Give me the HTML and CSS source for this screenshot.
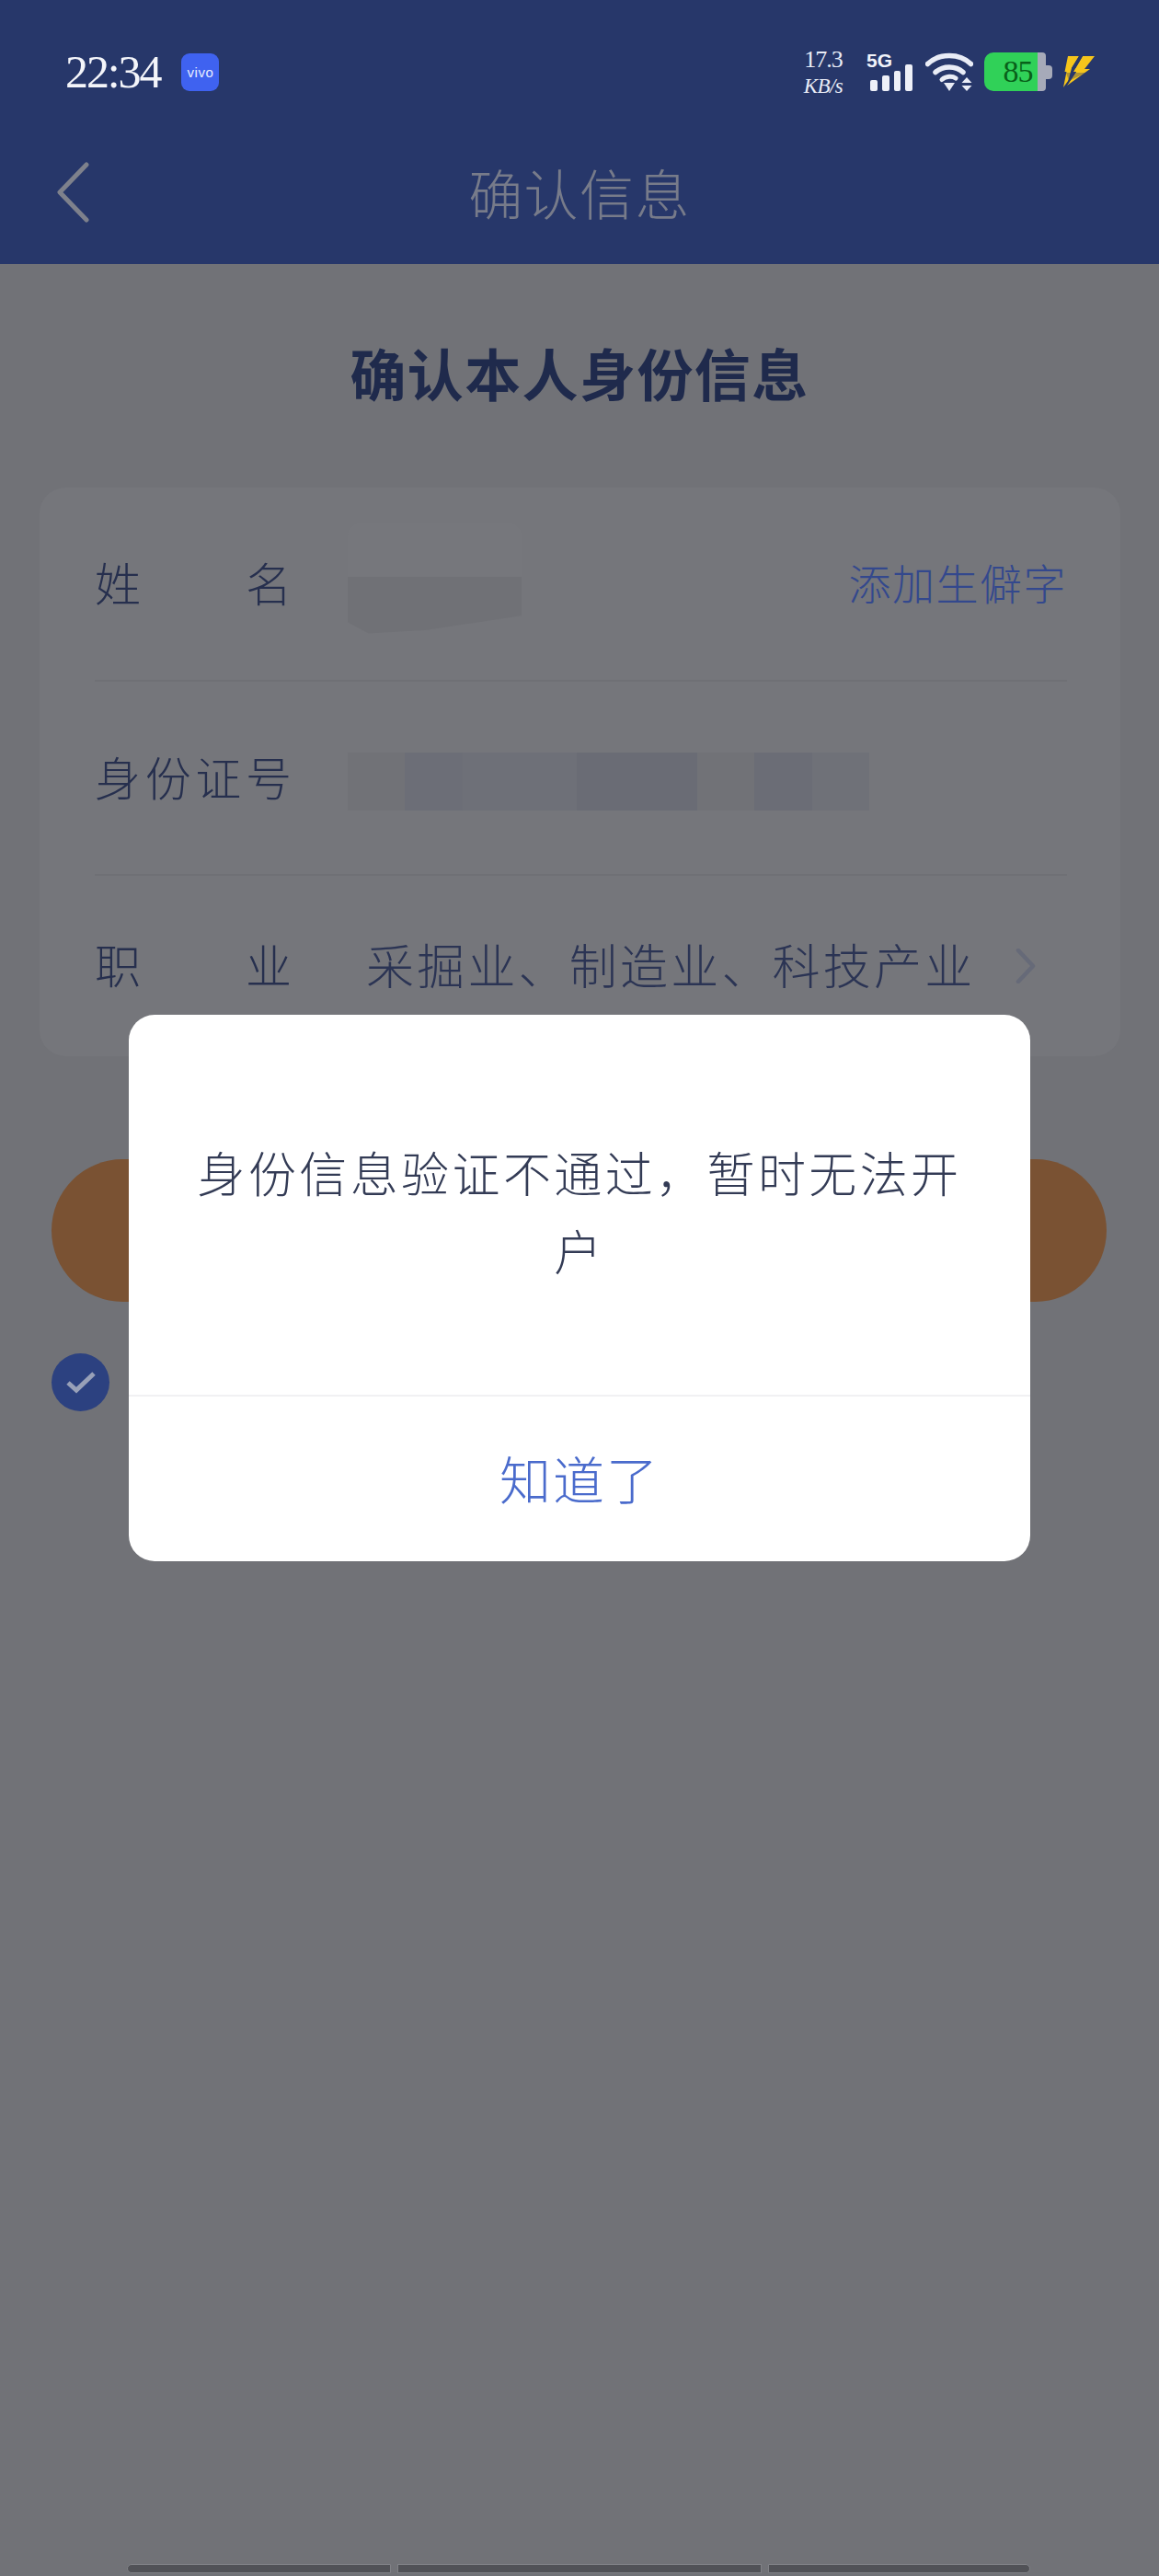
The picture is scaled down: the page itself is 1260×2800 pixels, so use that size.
FILE: index.html
```html
<!DOCTYPE html>
<html lang="zh-CN">
<head>
<meta charset="utf-8">
<title>确认信息</title>
<link rel="stylesheet" href="styles.css">
</head>
<body>
<div class="page">
  <header class="header">
    <div class="status">
      <div class="status-left">
        <span class="time">22:34</span>
        <span class="vivo">vivo</span>
      </div>
      <div class="status-right">
        <div class="speed"><span class="speed-num">17.3</span><span class="speed-unit">KB/s</span></div>
        <div class="signal">
          <span class="five-g">5G</span>
          <div class="bars"><i class="bar b1"></i><i class="bar b2"></i><i class="bar b3"></i><i class="bar b4"></i></div>
        </div>
        <svg class="wifi" viewBox="0 0 52 42" width="52" height="42">
          <path d="M2.5 12.5C15 .5 37 .5 49.5 12.5" fill="none" stroke="#e9ecf6" stroke-width="5.5" stroke-linecap="round"/>
          <path d="M11 21.5C19 14 33 14 41 21.5" fill="none" stroke="#e9ecf6" stroke-width="5.5" stroke-linecap="round"/>
          <path d="M18 29.5C22.5 25.5 29.5 25.5 33 28" fill="none" stroke="#e9ecf6" stroke-width="5" stroke-linecap="round"/>
          <path d="M20 33H32L26 42Z" fill="#e9ecf6"/>
          <path d="M45 27L50.5 33H39.5Z" fill="#e9ecf6"/>
          <path d="M39.5 36H50.5L45 42Z" fill="#e9ecf6"/>
        </svg>
        <div class="battery"><span class="batt-body">85</span><span class="batt-tip"></span></div>
        <svg class="bolt" viewBox="0 0 35 36" width="35" height="36">
          <path d="M6 1H18L10 14H16L1 35L4.5 18H2.5Z" fill="#f6c51b"/>
          <path d="M22 1H35L24 15H30L5 33L15 18H12Z" fill="#f6c51b"/>
          <path d="M18 1H22L12 18H15L5 33L10 14Z" fill="#27376a"/>
          <path d="M4 19H26L7 28Z" fill="#27376a" opacity=".35"/>
        </svg>
      </div>
    </div>
    <nav class="nav">
      <div class="nav-back">
        <svg viewBox="0 0 36 66" width="36" height="66"><path d="M33 3L4 33L33 63" fill="none" stroke="#7e818c" stroke-width="5" stroke-linecap="round" stroke-linejoin="round"/></svg>
      </div>
      <div class="nav-title">确认信息</div>
      <div></div>
    </nav>
  </header>

  <main class="main">
    <h1 class="heading">确认本人身份信息</h1>
    <section class="card">
      <div class="row">
        <div class="label"><span>姓</span><span>名</span></div>
        <div class="mask-name"></div>
        <div class="link">添加生僻字</div>
      </div>
      <div class="row">
        <div class="label"><span>身</span><span>份</span><span>证</span><span>号</span></div>
        <div class="mask-id"></div>
      </div>
      <div class="row row-last">
        <div class="label"><span>职</span><span>业</span></div>
        <div class="value">采掘业、制造业、科技产业</div>
        <svg class="row-arrow" viewBox="0 0 22 38" width="22" height="38"><path d="M3 2L19 19L3 36" fill="none" stroke="#666a78" stroke-width="4.5" stroke-linecap="round" stroke-linejoin="round"/></svg>
      </div>
    </section>
    <div class="primary"></div>
    <div class="agree">
      <span class="check">
        <svg viewBox="0 0 34 34" width="34" height="34"><path d="M3 17L12 25L31 7" fill="none" stroke="#98a0b8" stroke-width="5"/></svg>
      </span>
    </div>
  </main>

  <div class="home-bar">
    <span class="home-seg seg-a"></span>
    <span class="home-seg seg-b"></span>
    <span class="home-seg seg-c"></span>
  </div>

  <div class="modal">
    <div class="modal-body">身份信息验证不通过，暂时无法开户</div>
    <div class="modal-action">知道了</div>
  </div>
</div>
</body>
</html>
```

FILE: styles.css
```css
* { box-sizing: border-box; }
html, body { margin: 0; padding: 0; }
body {
  width: 1260px;
  height: 2800px;
  overflow: hidden;
  background: #717277;
  font-family: "Noto Sans CJK SC", "Noto Sans", sans-serif;
  font-weight: 300;
}
.page {
  position: relative;
  width: 1260px;
  height: 2800px;
  display: flex;
  flex-direction: column;
}

/* header */
.header {
  height: 287px;
  padding-top: 50px;
  background: #27376a;
  flex: none;
}
.status {
  height: 56px;
  padding: 0 70px 0 71px;
  display: flex;
  align-items: center;
  justify-content: space-between;
}
.status-left { display: flex; align-items: center; gap: 23px; }
.time {
  font-family: "Liberation Serif", serif;
  font-size: 50px;
  line-height: 56px;
  letter-spacing: -2.1px;
  color: #f4f5fa;
}
.vivo {
  width: 41px;
  height: 41px;
  border-radius: 9px;
  background: #3f62f0;
  color: #e8ecff;
  font-family: "Liberation Sans", sans-serif;
  font-size: 15px;
  letter-spacing: .5px;
  display: flex;
  align-items: center;
  justify-content: center;
}
.status-right { display: flex; align-items: center; gap: 12px; }
.speed {
  width: 44px;
  margin-right: 13px;
  display: flex;
  flex-direction: column;
  align-items: center;
  gap: 9px;
  font-family: "Liberation Serif", serif;
  color: #e9ecf6;
}
.speed-num { font-size: 26px; line-height: 22px; letter-spacing: -1px; }
.speed-unit { font-size: 23px; line-height: 17px; font-style: italic; letter-spacing: -.6px; }
.signal { position: relative; width: 52px; height: 42px; }
.five-g {
  position: absolute;
  left: 0;
  top: -2px;
  font-family: "Liberation Sans", sans-serif;
  font-weight: 700;
  font-size: 21px;
  line-height: 22px;
  color: #f1f3fa;
}
.bars {
  position: absolute;
  left: 4px;
  right: 2px;
  bottom: 0;
  height: 29px;
  display: flex;
  align-items: flex-end;
  gap: 5px;
}
.bar { width: 8.5px; background: #eef0f8; border-radius: 2px; display: block; }
.b1 { height: 12px; }
.b2 { height: 17px; }
.b3 { height: 22px; }
.b4 { height: 29px; }
.battery { display: flex; align-items: center; }
.batt-body {
  width: 67px;
  height: 42px;
  border-radius: 10px 4px 4px 10px;
  background: linear-gradient(to right, #30d158 0, #30d158 87%, #a6aab9 87%, #a6aab9 100%);
  color: #086019;
  font-family: "Liberation Serif", serif;
  font-size: 34px;
  line-height: 42px;
  letter-spacing: -1px;
  text-align: center;
  padding-left: 6px;
}
.batt-tip {
  width: 7px;
  height: 15px;
  background: #a6aab9;
  border-radius: 0 4px 4px 0;
}
.bolt { margin-left: -1px; }

.nav {
  margin-top: 43px;
  height: 120px;
  display: grid;
  grid-template-columns: 1fr auto 1fr;
  align-items: center;
}
.nav-back { padding-left: 61px; display: flex; }
.nav-title {
  font-size: 59px;
  line-height: 70px;
  letter-spacing: 1.4px;
  color: #777b8a;
}

/* main */
.main { flex: none; }
.heading {
  margin: 78px 0 0;
  text-align: center;
  font-size: 61px;
  line-height: 80px;
  letter-spacing: 1.4px;
  font-weight: 700;
  color: #1f2a4c;
}
.card {
  margin: 85px 42px 0 43px;
  height: 618px;
  padding: 0 58px 0 60px;
  background: #75767b;
  border-radius: 28px;
}
.row {
  height: 211px;
  border-bottom: 2px solid #6f7075;
  display: flex;
  align-items: center;
  color: #262f4e;
  font-size: 50px;
}
.row-last { height: 196px; border-bottom: 0; }
.label {
  width: 214px;
  flex: none;
  display: flex;
  justify-content: space-between;
  margin-top: -6px;
}
.mask-name {
  width: 189px;
  height: 120px;
  margin-left: 61px;
  margin-top: -12px;
  border-radius: 14px;
  background: linear-gradient(to bottom, #76777c 0, #76777c 48%, #707176 48%, #707176 100%);
  clip-path: polygon(0 0, 100% 0, 100% 84%, 45% 97%, 12% 100%, 0 90%);
}
.mask-id {
  width: 567px;
  height: 63px;
  margin-left: 61px;
  margin-top: 8px;
  background: linear-gradient(to right,
    #717277 0, #717277 11%,
    #6c6e77 11%, #6c6e77 22%,
    #6e7078 22%, #6e7078 44%,
    #6a6c75 44%, #6a6c75 67%,
    #717277 67%, #717277 78%,
    #6b6d76 78%, #6b6d76 89%,
    #6f7178 89%, #6f7178 100%);
}
.link {
  margin-left: auto;
  margin-top: -6px;
  font-size: 46px;
  letter-spacing: 1.5px;
  color: #33488d;
}
.value {
  margin-left: 81px;
  margin-top: -6px;
  font-size: 52px;
  letter-spacing: 3.2px;
  white-space: nowrap;
  color: #2b3454;
}
.row-arrow { margin-left: 44px; flex: none; }

.primary {
  margin: 112px 57px 0 56px;
  height: 155px;
  border-radius: 78px;
  background: #7a5233;
}
.agree {
  margin: 56px 0 0 56px;
  display: flex;
}
.check {
  width: 63px;
  height: 63px;
  border-radius: 50%;
  background: #2c4180;
  display: flex;
  align-items: center;
  justify-content: center;
}

/* home gesture bar */
.home-bar {
  margin-top: auto;
  margin-bottom: 3px;
  padding-left: 138px;
  display: flex;
  gap: 7px;
}
.home-seg {
  height: 10px;
  background: #515257;
  border: 1px solid #808186;
}
.seg-a { width: 287px; border-radius: 5px 0 0 5px; }
.seg-b { width: 396px; }
.seg-c { width: 285px; border-radius: 0 5px 5px 0; }

/* dialog */
.modal {
  position: absolute;
  left: 140px;
  top: 1103px;
  width: 980px;
  height: 594px;
  border-radius: 28px;
  background: #fff;
  display: flex;
  flex-direction: column;
}
.modal-body {
  height: 415px;
  flex: none;
  padding: 12px 66px 0;
  display: flex;
  align-items: center;
  text-align: center;
  font-size: 52px;
  line-height: 85px;
  letter-spacing: 3.4px;
  color: #333b55;
  border-bottom: 2px solid #f1f1f3;
}
.modal-action {
  flex: 1;
  display: flex;
  align-items: center;
  justify-content: center;
  padding-bottom: 4px;
  font-size: 56px;
  letter-spacing: 2px;
  color: #4a6bcc;
}
```
